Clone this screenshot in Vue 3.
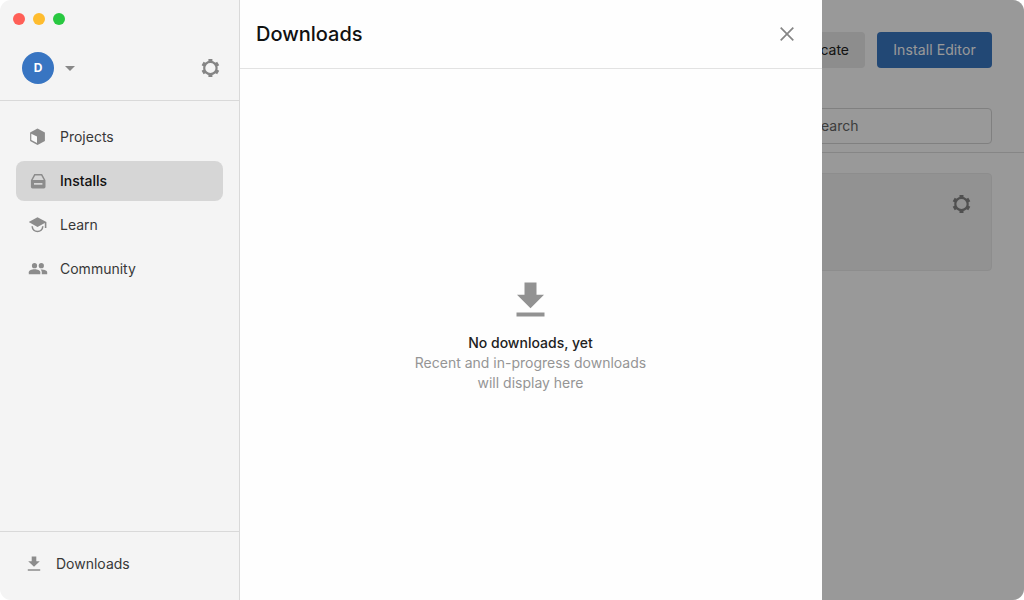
<script setup>
const nav = [
  { id: 'projects', label: 'Projects' },
  { id: 'installs', label: 'Installs' },
  { id: 'learn', label: 'Learn' },
  { id: 'community', label: 'Community' },
]
const active = 'installs'
const gearTeeth = [0, 60, 120, 180, 240, 300]
</script>

<template>
  <div class="window">
    <aside class="sidebar">
      <div class="lights">
        <span class="light red"></span>
        <span class="light yellow"></span>
        <span class="light green"></span>
      </div>
      <div class="account">
        <span class="avatar">D</span>
        <svg class="caret" width="10" height="5" viewBox="0 0 10 5"><path d="M0 0h10L5 5z" fill="#888" /></svg>
        <svg class="gear" width="20" height="20" viewBox="-10.400 -10 20 20" fill="#858585">
          <circle r="6.200" fill="none" stroke="#858585" stroke-width="2.200" />
          <path v-for="a in gearTeeth" :key="a" d="M-2-9h4v3h-4z" :transform="`rotate(${a})`" />
        </svg>
      </div>
      <nav class="nav">
        <a v-for="item in nav" :key="item.id" class="item" :class="{ active: item.id === active }">
          <svg width="20" height="20" viewBox="0 0 20 20" fill="#8c8c8c">
            <template v-if="item.id === 'projects'">
              <path d="M9.500 1.600l7.400 3.800v8.700l-7.400 4-7.400-4V5.400z" />
              <path d="M3.300 6.800l5.700 2.800v6.500l-5.700-3z" fill="#fafafa" />
            </template>
            <template v-else-if="item.id === 'installs'">
              <path
                d="M6.300 3h7.800l3.400 6.200v6.600a1.600 1.600 0 0 1-1.600 1.600H4.500a1.600 1.600 0 0 1-1.600-1.600V9.200zM7.200 4.500L4.700 9.100h11l-2.500-4.600zM6 12v1.700h8.400V12z"
                fill-rule="evenodd"
              />
            </template>
            <template v-else-if="item.id === 'learn'">
              <path d="M9.500 2.200l8.900 4.800v6H16.800V8.100l-7.300 3.900L.700 7z" />
              <path d="M4.200 11.300c.3 6.900 10.300 6.900 10.600 0" fill="none" stroke="#8c8c8c" stroke-width="1.600" />
            </template>
            <template v-else>
              <circle cx="6.500" cy="6.700" r="2.600" />
              <circle cx="13.300" cy="6.700" r="2.600" />
              <path d="M.800 15.200v-1.900c0-4.100 11.500-4.100 11.500 0v1.900z" />
              <path d="M13.800 15.200v-1.900c0-1.200-.5-2.100-1.300-2.800 2.800-.1 6.700.7 6.700 2.800v1.900z" />
            </template>
          </svg>
          <span>{{ item.label }}</span>
        </a>
      </nav>
      <div class="footer">
        <svg width="14" height="16" viewBox="0 0 14 16" fill="#8c8c8c">
          <path d="M4.700.500h4.600v4.700h3.500L7 10.800 1.200 5.200h3.500zM.800 13.200h12.400v1.600H.800z" />
        </svg>
        <span>Downloads</span>
      </div>
    </aside>

    <main class="main">
      <header class="toolbar">
        <button class="btn">Locate</button>
        <button class="btn primary">Install Editor</button>
      </header>
      <div class="filters">
        <div class="search">Search</div>
      </div>
      <div class="card">
        <svg width="20" height="20" viewBox="-9.500 -10 20 20" fill="#858585">
          <circle r="6.200" fill="none" stroke="#858585" stroke-width="2.200" />
          <path v-for="a in gearTeeth" :key="a" d="M-2-9h4v3h-4z" :transform="`rotate(${a})`" />
        </svg>
      </div>

      <div class="scrim"></div>
      <section class="drawer">
        <header class="drawer-head">
          <h1>Downloads</h1>
          <svg width="14" height="14" viewBox="0 0 14 14"><path d="M.700.700l12.600 12.600M13.300.700L.700 13.300" stroke="#858585" stroke-width="1.700" /></svg>
        </header>
        <div class="empty">
          <svg width="29" height="35" viewBox="0 0 29 35" fill="#929292">
            <path d="M8.500.500h12v12.300h7.500L14.500 26.300 1 12.800h7.500zM.500 30.500h28v4h-28z" />
          </svg>
          <strong>No downloads, yet</strong>
          <p>Recent and in-progress downloads<br />will display here</p>
        </div>
      </section>
    </main>
  </div>
</template>

<style>
body {
  background: #fff;
}
</style>

<style scoped>
.window {
  width: 1024px;
  height: 600px;
  display: flex;
  border-radius: 11px;
  overflow: hidden;
  font-family: Inter, "Liberation Sans", sans-serif;
  font-size: 14px;
  line-height: 20px;
  color: #383838;
}
.window * {
  box-sizing: border-box;
}
svg {
  display: block;
  flex: none;
}
.sidebar {
  width: 240px;
  flex: none;
  display: flex;
  flex-direction: column;
  background: #f4f4f4;
  border-right: 1px solid #d9d9d9;
}
.lights {
  display: flex;
  gap: 8px;
  padding: 13px 13px 0;
}
.light {
  width: 12px;
  height: 12px;
  border-radius: 50%;
}
.red { background: #ff5f57; }
.yellow { background: #febc2e; }
.green { background: #28c840; }
.account {
  flex: none;
  display: flex;
  align-items: center;
  height: 76px;
  padding: 10px 19px 0 22px;
  border-bottom: 1px solid #d9d9d9;
}
.avatar {
  width: 32px;
  height: 32px;
  border-radius: 50%;
  background: #3875c2;
  color: #fff;
  font-size: 12px;
  font-weight: 700;
  line-height: 32px;
  text-align: center;
}
.caret {
  margin: 1px 0 0 11px;
}
.gear {
  margin-left: auto;
}
.nav {
  flex: 1;
  display: flex;
  flex-direction: column;
  gap: 4px;
  padding: 16px 16px 0;
}
.item {
  height: 40px;
  display: flex;
  align-items: center;
  gap: 12px;
  padding: 0 12px;
  border-radius: 8px;
}
.active {
  background: #d6d6d6;
  color: #111;
  font-weight: 500;
}
.footer {
  flex: none;
  height: 69px;
  display: flex;
  align-items: center;
  gap: 15px;
  padding: 0 27px 4px;
  border-top: 1px solid #d9d9d9;
}
.main {
  position: relative;
  flex: 1;
  background: #fff;
}
.toolbar {
  display: flex;
  justify-content: flex-end;
  gap: 12px;
  padding: 32px 32px 0;
}
.btn {
  height: 36px;
  padding: 0 16px;
  border: 0;
  border-radius: 4px;
  background: #ebebeb;
  color: #222;
  font: inherit;
}
.primary {
  width: 115px;
  padding: 0;
  background: #3a78c4;
  color: #fff;
  letter-spacing: 0.1px;
}
.filters {
  display: flex;
  justify-content: flex-end;
  height: 85px;
  padding: 40px 32px 0;
  border-bottom: 1px solid #e0e0e0;
}
.search {
  width: 208px;
  height: 36px;
  padding: 7px 0 0 27px;
  border: 1px solid #d6d6d6;
  border-radius: 4px;
  color: #666;
}
.card {
  display: flex;
  justify-content: flex-end;
  height: 98px;
  margin: 20px 32px 0;
  padding: 20px 19px 0;
  border: 1px solid #ececec;
  border-radius: 4px;
  background: #f3f3f3;
}
.scrim {
  position: absolute;
  inset: 0;
  background: rgba(0, 0, 0, 0.4);
}
.drawer {
  position: absolute;
  top: 0;
  bottom: 0;
  left: 0;
  width: 582px;
  display: flex;
  flex-direction: column;
  background: #fefefe;
}
.drawer-head {
  display: flex;
  align-items: center;
  justify-content: space-between;
  height: 69px;
  padding: 0 28px 0 16px;
  border-bottom: 1px solid #e2e2e2;
}
h1 {
  margin: 0;
  font-size: 20px;
  font-weight: 500;
  line-height: 28px;
  color: #111;
}
.empty {
  display: flex;
  flex-direction: column;
  align-items: center;
  padding: 213px 1px 0 0;
  text-align: center;
}
.empty strong {
  margin-top: 16px;
  font-weight: 500;
  color: #222;
}
.empty p {
  margin: 0;
  color: #959595;
}
</style>
